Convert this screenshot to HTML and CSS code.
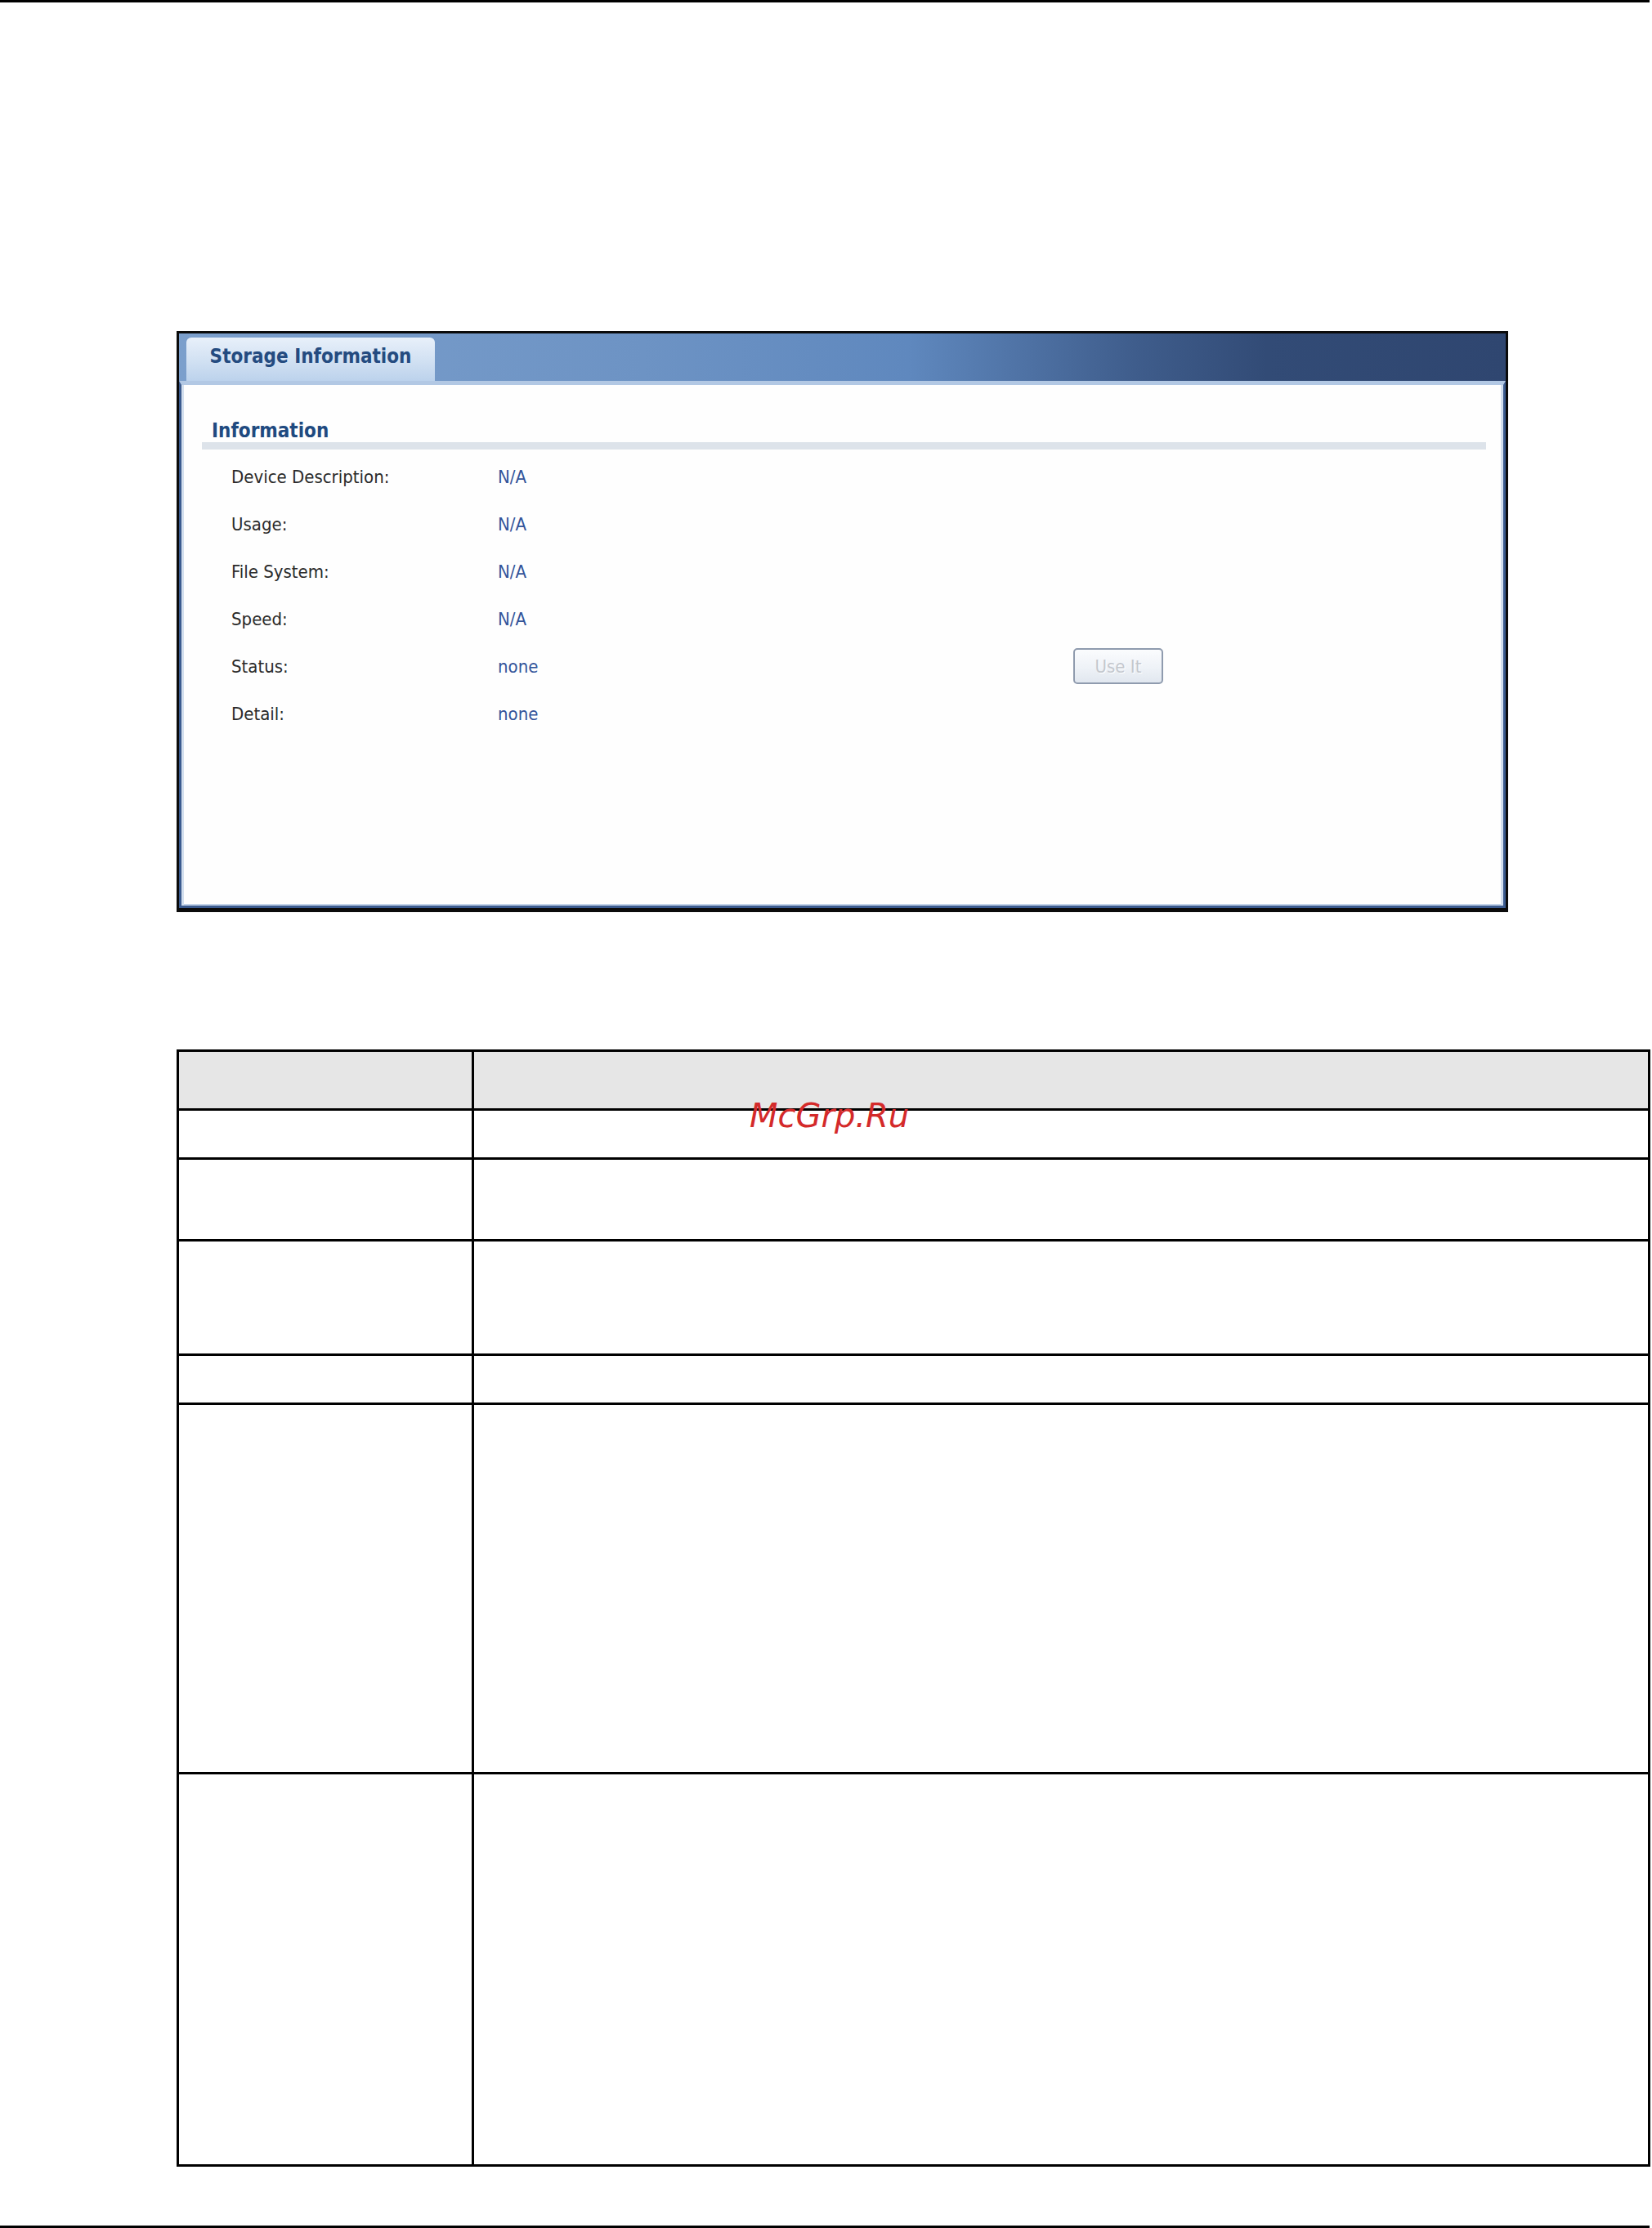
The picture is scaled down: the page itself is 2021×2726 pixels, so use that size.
FILE: index.html
```html
<!DOCTYPE html>
<html lang="en">
<head>
    <meta charset="UTF-8">
    <meta name="viewport" content="width=device-width, initial-scale=1.0">
    <title>Storage Information</title>
    <link rel="stylesheet" href="styles.css">
</head>
<body>
    <div class="rule"></div>

    <!-- screen capture of the web configurator -->
    <div class="panel">
        <div class="panel-head">
            <div class="tab">Storage Information</div>
        </div>
        <div class="panel-body">
            <div class="section">
                <h2 class="section-title">Information</h2>
                <div class="row"><span class="label">Device Description:</span><span class="value">N/A</span></div>
                <div class="row"><span class="label">Usage:</span><span class="value">N/A</span></div>
                <div class="row"><span class="label">File System:</span><span class="value">N/A</span></div>
                <div class="row"><span class="label">Speed:</span><span class="value">N/A</span></div>
                <div class="row"><span class="label">Status:</span><span class="value">none</span><input type="button" class="btn" value="Use It" disabled></div>
                <div class="row"><span class="label">Detail:</span><span class="value">none</span></div>
            </div>
        </div>
    </div>

    <!-- field description table -->
    <div class="spec">
        <div class="spec-row head h72"><div class="cell"></div><div class="cell"></div></div>
        <div class="spec-row h60"><div class="cell"></div><div class="cell"></div></div>
        <div class="spec-row h100"><div class="cell"></div><div class="cell"></div></div>
        <div class="spec-row h140"><div class="cell"></div><div class="cell"></div></div>
        <div class="spec-row h60"><div class="cell"></div><div class="cell"></div></div>
        <div class="spec-row h452"><div class="cell"></div><div class="cell"></div></div>
        <div class="spec-row h480 last"><div class="cell"></div><div class="cell"></div></div>
    </div>

    <div class="rule bottom"></div>

    <span class="watermark">McGrp.Ru</span>
</body>
</html>
```

FILE: styles.css
```css
*{
    margin:0;
    padding:0;
    box-sizing:border-box;
}

body{
    background:#fff;
    font-family:"DejaVu Sans Condensed","DejaVu Sans",sans-serif;
    width:2021px;
    height:2726px;
    overflow:hidden;
}

.rule{
    width:2018px;
    height:3px;
    background:#000;
}
.rule.bottom{
    margin-top:72px;
}

/* panel */
.panel{
    margin:402px 0 0 216px;
    width:1629px;
    height:711px;
    border:3px solid #0b0b0b;
    border-bottom-width:5px;
    display:flex;
    flex-direction:column;
}
.panel-head{
    height:58px;
    padding:5px 0 0 9px;
    display:flex;
    align-items:flex-end;
    background:linear-gradient(to right,#7b9fcc 0%,#6d93c4 35%,#5f88be 55%,#3f5d8c 72%,#324b76 82%,#2f4670 100%);
}
.tab{
    width:304px;
    height:53px;
    border-radius:6px 6px 0 0;
    background:linear-gradient(to bottom,#e8f0fa 0%,#d3e2f3 50%,#bcd2ec 100%);
    color:#244b80;
    font-weight:bold;
    font-size:24px;
    line-height:46px;
    text-align:center;
}
.panel-body{
    flex:1;
    background:#fefefe;
    border:3px solid #3b5b8f;
    border-top:5px solid #b2c8e4;
    box-shadow:inset 3px 0 0 #d3dfee, inset -3px 0 0 #d3dfee, inset 0 -2px 0 #c4d4ea;
}

.section{
    margin:0 21px 0 25px;
    padding-top:41px;
}
.section-title{
    height:38px;
    padding-left:12px;
    border-bottom:9px solid #dde3ea;
    color:#1f4a80;
    font-size:24px;
    font-weight:bold;
    line-height:30px;
}
.section-title + .row{
    margin-top:4px;
}

.row{
    display:flex;
    align-items:center;
    height:58px;
    padding-left:36px;
    font-size:22px;
}
.label{
    width:326px;
    color:#2a2a2a;
}
.value{
    width:704px;
    color:#33549a;
}
.btn{
    width:110px;
    height:44px;
    border:2px solid #8f9bae;
    border-radius:5px;
    background:linear-gradient(to bottom,#fbfcfe 0%,#eef2f7 55%,#e1e7ef 100%);
    color:#c3c7cd;
    text-shadow:1px 1px 0 #fff;
    font-family:"DejaVu Sans Condensed","DejaVu Sans",sans-serif;
    font-size:22px;
    outline:none;
}

/* table */
.spec{
    margin:168px 0 0 216px;
    width:1803px;
    border:3px solid #000;
    border-bottom:none;
}
.spec-row{
    display:grid;
    grid-template-columns:361px 1fr;
    border-bottom:3px solid #000;
}
.spec-row .cell:first-child{
    border-right:3px solid #000;
}
.spec-row.head{
    background:#e6e6e6;
}
.h72{ height:72px; }
.h60{ height:60px; }
.h100{ height:100px; }
.h140{ height:140px; }
.h452{ height:452px; }
.h480{ height:480px; }

.watermark{
    position:absolute;
    left:917px;
    top:1345px;
    color:#d42a2a;
    font-family:"DejaVu Sans",sans-serif;
    font-style:italic;
    font-size:40px;
    line-height:40px;
}
```
